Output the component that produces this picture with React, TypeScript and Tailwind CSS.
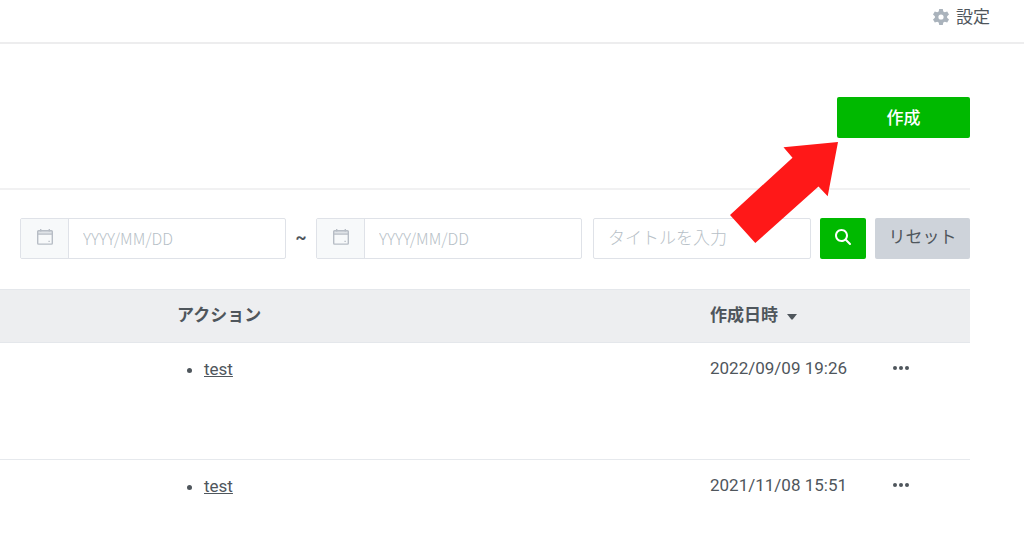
import { useState } from 'react';
import { FaMagnifyingGlass } from 'react-icons/fa6';

const entries = [
  { id: 1, action: 'test', createdAt: '2022/09/09 19:26' },
  { id: 2, action: 'test', createdAt: '2021/11/08 15:51' },
];

const GearIcon = () => (
  <svg viewBox="0 0 16 16" className="size-4" fill="#aab3bc" aria-hidden="true">
    <path
      fillRule="evenodd"
      d="M6.2 0H9.8L10.3 2.4L11.8 3.3L14.2 2.5L16 5.6L14.1 7.2V8.8L16 10.4L14.2 13.5L11.8 12.7L10.3 13.6L9.8 16H6.2L5.7 13.6L4.2 12.7L1.8 13.5L0 10.4L1.9 8.8V7.2L0 5.6L1.8 2.5L4.2 3.3L5.7 2.4ZM8 5.4A2.6 2.6 0 1 0 8 10.6A2.6 2.6 0 1 0 8 5.4Z"
    />
  </svg>
);

const CalendarIcon = () => (
  <svg viewBox="0 0 16 16" className="size-4" fill="none" stroke="#b7bdc5" aria-hidden="true">
    <path d="M1 2H15V5H1Z" fill="#dfe3e7" stroke="none" />
    <rect x="0.7" y="1.7" width="14.6" height="13.4" rx="0.8" strokeWidth="1.4" />
    <path d="M0.7 5.2H15.3" strokeWidth="1.3" />
    <path d="M3.7 0V2.5M12.3 0V2.5" strokeWidth="1.4" />
    <path d="M11.3 12.3H13" strokeWidth="1" />
  </svg>
);

type DateFieldProps = {
  label: string;
  value: string;
  onChange: (value: string) => void;
};

const DateField = ({ label, value, onChange }: DateFieldProps) => (
  <label className="flex h-[41px] min-w-0 flex-1 overflow-hidden rounded-xs border border-[#dfe2e8] bg-white">
    <span className="flex w-12 shrink-0 items-center justify-center border-r border-[#dfe2e8] bg-[#f7f9fa] pb-1">
      <CalendarIcon />
    </span>
    <input
      type="text"
      aria-label={label}
      value={value}
      onChange={(e) => onChange(e.target.value)}
      placeholder="YYYY/MM/DD"
      className="w-full min-w-0 px-[14px] pb-[2px] font-['Noto_Sans_CJK_JP',sans-serif] text-[16px] font-light outline-none placeholder:text-[#b7bfc7]"
    />
  </label>
);

const PointerArrow = () => (
  <svg
    viewBox="0 0 108 101"
    className="pointer-events-none absolute top-[45px] right-[132px] z-10 h-[101px] w-[108px]"
    aria-hidden="true"
  >
    <path d="M108 0L53.5 5.3L62.5 15.7L0 73L25.3 101L88.5 44.5L97.7 54.3Z" fill="#ff1818" />
  </svg>
);

const App = () => {
  const [from, setFrom] = useState('');
  const [to, setTo] = useState('');
  const [title, setTitle] = useState('');

  const handleReset = () => {
    setFrom('');
    setTo('');
    setTitle('');
  };

  return (
    <div className="min-h-screen bg-white font-[Roboto,'Noto_Sans_CJK_JP',sans-serif] text-[17px] leading-6 text-[#4f565c]">
      <header className="flex h-11 justify-end border-b-2 border-[#ededee] pt-[5px] pr-[34px]">
        <a href="#settings" className="flex h-6 items-center gap-[7px]">
          <GearIcon />
          設定
        </a>
      </header>

      <main className="pr-[54px]">
        <div className="flex justify-end border-b-2 border-[#f1f1f2] pt-[53px] pb-[50px]">
          <div className="relative">
            <button type="button" className="h-[41px] w-[133px] rounded-xs bg-[#00b900] font-medium text-white">
              作成
            </button>
            <PointerArrow />
          </div>
        </div>

        <form onSubmit={(e) => e.preventDefault()} className="flex items-center pt-[28px] pb-[30px] pl-5">
          <DateField label="開始日" value={from} onChange={setFrom} />
          <span className="w-[30px] shrink-0 pb-1 text-center font-bold">~</span>
          <DateField label="終了日" value={to} onChange={setTo} />
          <input
            type="text"
            aria-label="タイトル"
            value={title}
            onChange={(e) => setTitle(e.target.value)}
            placeholder="タイトルを入力"
            className="ml-[11px] h-[41px] w-[218px] rounded-xs border border-[#dfe2e8] px-[14px] pb-[2px] font-light outline-none placeholder:text-[#b7bfc7]"
          />
          <button
            type="submit"
            aria-label="検索"
            className="ml-[9px] flex h-[41px] w-[46px] items-center justify-center rounded-xs bg-[#00b900] pb-[3px] text-white"
          >
            <FaMagnifyingGlass className="size-4" />
          </button>
          <button
            type="button"
            onClick={handleReset}
            className="ml-[9px] h-[41px] w-[95px] rounded-xs bg-[#ced3da] pb-[3px]"
          >
            リセット
          </button>
        </form>

        <table className="w-full table-fixed border-collapse text-left">
          <thead>
            <tr className="h-[53px] border-y border-[#e4e7eb] bg-[#edeef0]">
              <th className="w-[177px]" />
              <th className="pb-[2px] font-bold">アクション</th>
              <th className="w-[183px] pb-[2px] font-bold">
                <button type="button" className="flex items-center gap-[9px]">
                  作成日時
                  <svg viewBox="0 0 10 6" className="mt-1 h-[6px] w-[10px]" fill="currentColor" aria-hidden="true">
                    <path d="M0 0H10L5.8 5.3Q5 6.2 4.2 5.3Z" />
                  </svg>
                </button>
              </th>
              <th className="w-[77px]" />
            </tr>
          </thead>
          <tbody>
            {entries.map((entry) => (
              <tr key={entry.id} className="h-[117px] border-b border-[#e6e9ed] align-top last:h-[78px] last:border-b-0">
                <td />
                <td className="pt-[14px]">
                  <ul className="list-disc pl-[27px]">
                    <li>
                      <a href={`#entry-${entry.id}`} className="underline">
                        {entry.action}
                      </a>
                    </li>
                  </ul>
                </td>
                <td className="pt-[13px]">{entry.createdAt}</td>
                <td className="pt-[13px]">
                  <button type="button" aria-label="メニュー" className="flex h-6 w-4 items-center justify-between">
                    <span className="size-1 rounded-full bg-[#4f565c]" />
                    <span className="size-1 rounded-full bg-[#4f565c]" />
                    <span className="size-1 rounded-full bg-[#4f565c]" />
                  </button>
                </td>
              </tr>
            ))}
          </tbody>
        </table>
      </main>
    </div>
  );
};

export default App;
